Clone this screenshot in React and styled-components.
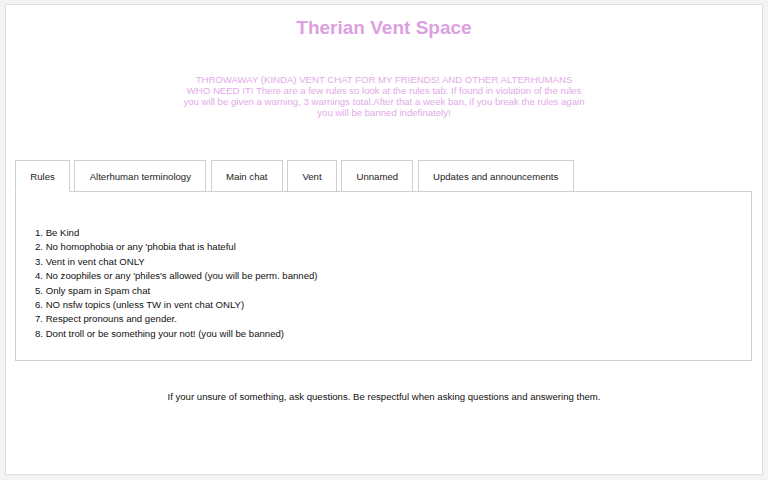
import React, { useState } from "react";
import styled, { createGlobalStyle } from "styled-components";

const Global = createGlobalStyle`
  html, body { margin: 0; padding: 0; background: #f3f3f3; }
  body { font-family: "Liberation Sans", Arial, sans-serif; }
  * { box-sizing: border-box; }
`;

const Page = styled.div`
  margin: 4px 5px 0 5px;
  height: 471px;
  background: #fff;
  border: 1px solid #dedede;
  display: flex;
  flex-direction: column;
  align-items: center;
`;

const Title = styled.h1`
  margin: 12px 0 0;
  font-size: 19px;
  line-height: 22px;
  font-weight: bold;
  color: #dca0e2;
`;

const Intro = styled.p`
  margin: 35px 0 0;
  max-width: 430px;
  text-align: center;
  font-size: 9.6px;
  line-height: 11px;
  color: #e2aae8;
`;

const TabsWrap = styled.div`
  align-self: stretch;
  margin: 42px 10px 0 9px;
`;

const TabBar = styled.div`
  display: flex;
  gap: 4.4px;
  align-items: flex-end;
  position: relative;
  z-index: 1;
`;

const Tab = styled.button`
  height: 32px;
  padding: 0 14.25px;
  border: 1px solid #cfcfcf;
  border-bottom: ${(p) => (p.$active ? "1px solid #fff" : "1px solid #cfcfcf")};
  background: #fff;
  font-family: inherit;
  font-size: 9.6px;
  color: #222;
  cursor: pointer;
  margin-bottom: -1px;
`;

const Panel = styled.div`
  border: 1px solid #cfcfcf;
  height: 170px;
  padding: 34px 19px 0;
`;

const RuleList = styled.ol`
  margin: 0;
  padding: 0;
  list-style: none;
`;

const Rule = styled.li`
  font-size: 9.6px;
  line-height: 14.4px;
  color: #111;
`;

const Footer = styled.p`
  margin: 30px 0 0;
  font-size: 9.6px;
  line-height: 11px;
  color: #111;
  text-align: center;
`;

const tabs = [
  "Rules",
  "Alterhuman terminology",
  "Main chat",
  "Vent",
  "Unnamed",
  "Updates and announcements",
];

const rules = [
  "1. Be Kind",
  "2. No homophobia or any 'phobia that is hateful",
  "3. Vent in vent chat ONLY",
  "4. No zoophiles or any 'philes's allowed (you will be perm. banned)",
  "5. Only spam in Spam chat",
  "6. NO nsfw topics (unless TW in vent chat ONLY)",
  "7. Respect pronouns and gender.",
  "8. Dont troll or be something your not! (you will be banned)",
];

export default function App() {
  const [active, setActive] = useState(0);
  return (
    <>
      <Global />
      <Page>
        <Title>Therian Vent Space</Title>
        <Intro>
          THROWAWAY (KINDA) VENT CHAT FOR MY FRIENDS! AND OTHER ALTERHUMANS
          <br />
          WHO NEED IT! There are a few rules so look at the rules tab. If found
          in violation of the rules
          <br />
          you will be given a warning, 3 warnings total.After that a week ban,
          if you break the rules again
          <br />
          you will be banned indefinately!
        </Intro>
        <TabsWrap>
          <TabBar>
            {tabs.map((t, i) => (
              <Tab key={t} $active={i === active} onClick={() => setActive(i)}>
                {t}
              </Tab>
            ))}
          </TabBar>
          <Panel>
            {active === 0 && (
              <RuleList>
                {rules.map((r) => (
                  <Rule key={r}>{r}</Rule>
                ))}
              </RuleList>
            )}
          </Panel>
        </TabsWrap>
        <Footer>
          If your unsure of something, ask questions. Be respectful when asking
          questions and answering them.
        </Footer>
      </Page>
    </>
  );
}
